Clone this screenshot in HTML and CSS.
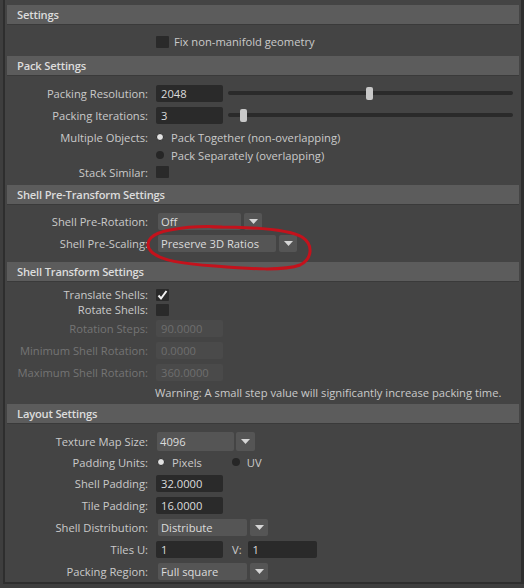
FILE: index.html
```html
<!DOCTYPE html>
<html>
<head>
<meta charset="utf-8">
<link rel="stylesheet" href="styles.css">
</head>
<body>
<div class="frame">
  <section class="sec">
    <div class="hdr">Settings</div>
    <div class="body s1">
      <div class="row h17"><span></span><div class="ctl"><span class="cb"></span><span class="cbtext">Fix non-manifold geometry</span></div></div>
    </div>
  </section>

  <section class="sec">
    <div class="hdr">Pack Settings</div>
    <div class="body s2">
      <div class="row h22"><span class="lbl">Packing Resolution:</span><div class="ctl"><span class="field">2048</span><div class="slider"><span class="handle res"></span></div></div></div>
      <div class="row h22"><span class="lbl">Packing Iterations:</span><div class="ctl"><span class="field">3</span><div class="slider"><span class="handle iter"></span></div></div></div>
      <div class="row h18 mt2"><span class="lbl">Multiple Objects:</span><div class="ctl"><span class="rb on"></span><span class="rtext">Pack Together (non-overlapping)</span></div></div>
      <div class="row h18"><span></span><div class="ctl"><span class="rb"></span><span class="rtext">Pack Separately (overlapping)</span></div></div>
      <div class="row h16"><span class="lbl">Stack Similar:</span><div class="ctl"><span class="cb"></span></div></div>
    </div>
  </section>

  <section class="sec">
    <div class="hdr">Shell Pre-Transform Settings</div>
    <div class="body s3">
      <div class="row h22"><span class="lbl">Shell Pre-Rotation:</span><div class="ctl"><div class="dd"><span class="dd-field w83">Off</span><span class="dd-btn"><svg width="9" height="5" viewBox="0 0 9 5"><polygon points="0,0 9,0 4.5,5" fill="#d6d6d6"/></svg></span></div></div></div>
      <div class="row h22"><span class="lbl">Shell Pre-Scaling:</span><div class="ctl"><div class="dd"><span class="dd-field w118">Preserve 3D Ratios</span><span class="dd-btn"><svg width="9" height="5" viewBox="0 0 9 5"><polygon points="0,0 9,0 4.5,5" fill="#d6d6d6"/></svg></span></div></div></div>
    </div>
  </section>

  <section class="sec">
    <div class="hdr">Shell Transform Settings</div>
    <div class="body s4">
      <div class="row h15"><span class="lbl">Translate Shells:</span><div class="ctl"><span class="cb"><svg width="13" height="12" viewBox="0 0 13 12"><polyline points="2.5,6.5 5,9.5 10.5,2" fill="none" stroke="#f2f2f2" stroke-width="2"/></svg></span></div></div>
      <div class="row h15"><span class="lbl">Rotate Shells:</span><div class="ctl"><span class="cb"></span></div></div>
      <div class="row h22"><span class="lbl dis">Rotation Steps:</span><div class="ctl"><span class="field disf">90.0000</span></div></div>
      <div class="row h22"><span class="lbl dis">Minimum Shell Rotation:</span><div class="ctl"><span class="field disf">0.0000</span></div></div>
      <div class="row h22"><span class="lbl dis">Maximum Shell Rotation:</span><div class="ctl"><span class="field disf">360.0000</span></div></div>
      <div class="row h18"><span></span><div class="ctl"><span class="warn">Warning: A small step value will significantly increase packing time.</span></div></div>
    </div>
  </section>

  <section class="sec">
    <div class="hdr">Layout Settings</div>
    <div class="body s5">
      <div class="row h22"><span class="lbl">Texture Map Size:</span><div class="ctl"><div class="dd dd1"><span class="dd-field w77 tall">4096</span><span class="dd-btn w19 tall"><svg width="9" height="5" viewBox="0 0 9 5"><polygon points="0,0 9,0 4.5,5" fill="#d6d6d6"/></svg></span></div></div></div>
      <div class="row h20"><span class="lbl">Padding Units:</span><div class="ctl"><span class="rb on px"></span><span class="rtext">Pixels</span><span class="rb uv"></span><span class="rtext">UV</span></div></div>
      <div class="row h22"><span class="lbl">Shell Padding:</span><div class="ctl"><span class="field">32.0000</span></div></div>
      <div class="row h22"><span class="lbl">Tile Padding:</span><div class="ctl"><span class="field">16.0000</span></div></div>
      <div class="row h22"><span class="lbl">Shell Distribution:</span><div class="ctl"><div class="dd"><span class="dd-field w89">Distribute</span><span class="dd-btn"><svg width="9" height="5" viewBox="0 0 9 5"><polygon points="0,0 9,0 4.5,5" fill="#d6d6d6"/></svg></span></div></div></div>
      <div class="row h22"><span class="lbl">Tiles U:</span><div class="ctl"><span class="field">1</span><span class="vlbl">V:</span><span class="field w69">1</span></div></div>
      <div class="row h22"><span class="lbl">Packing Region:</span><div class="ctl"><div class="dd"><span class="dd-field w89">Full square</span><span class="dd-btn"><svg width="9" height="5" viewBox="0 0 9 5"><polygon points="0,0 9,0 4.5,5" fill="#d6d6d6"/></svg></span></div></div></div>
    </div>
  </section>
</div>

<svg class="mark" width="524" height="588" viewBox="0 0 524 588">
  <path d="M212,227 C250,227 288,229 302,237 C314,245 312,259 300,265 C284,271 250,269 215,266 C185,264 158,261 150,250 C144,241 152,233 170,230 C186,227 205,226 222,227" fill="none" stroke="#c4121c" stroke-width="3" stroke-linecap="round"/>
</svg>
</body>
</html>
```

FILE: styles.css
```css
html, body {
  margin: 0;
  padding: 0;
}
body {
  width: 524px;
  height: 588px;
  overflow: hidden;
  background: #3e3e3e;
  font-family: "Open Sans", "Noto Sans", sans-serif;
  font-size: 11.2px;
  color: #cacaca;
  position: relative;
}
.frame {
  margin-left: 3px;
  width: 512px;
  padding: 5px 2px 0;
  background: #444444;
  border-left: 2px solid #2e2e2e;
  border-right: 3px solid #2e2e2e;
  border-bottom: 2px solid #2e2e2e;
}
.hdr {
  height: 19px;
  line-height: 19px;
  background: #5c5c5c;
  border-bottom: 1px solid #3a3a3a;
  padding-left: 10px;
  font-weight: 600;
  letter-spacing: -0.2px;
  color: #dcdcdc;
}
.body { display: flex; flex-direction: column; }
.s1 { padding: 8px 0 6px; }
.s2 { padding: 6px 0 5px; }
.s3 { padding: 5px 0 8px; }
.s4 { padding: 5px 0 3px; }
.s5 { padding: 6px 0 0; }

.row {
  display: grid;
  grid-template-columns: 141px 1fr;
  column-gap: 8px;
  align-items: center;
}
.h15 { height: 15px; }
.h16 { height: 16px; }
.h17 { height: 17px; }
.h18 { height: 18px; }
.h20 { height: 20px; }
.h22 { height: 22px; }
.mt2 { margin-top: 2px; }

.lbl { text-align: right; white-space: nowrap; }
.lbl.dis { color: #747474; }
.ctl { display: flex; align-items: center; white-space: nowrap; }

.field {
  box-sizing: border-box;
  width: 67px;
  height: 17px;
  line-height: 17px;
  padding-left: 5px;
  background: #2a2a2a;
  border-radius: 2px;
  color: #dcdcdc;
}
.field.w69 { width: 69px; }
.field.disf { background: #4a4a4a; color: #6e6e6e; }

.slider {
  position: relative;
  width: 285px;
  height: 4px;
  margin-left: 5px;
  background: #2a2a2a;
  border-radius: 2px;
}
.handle {
  position: absolute;
  top: -4.5px;
  width: 7px;
  height: 13px;
  background: #c8c8c8;
  border-radius: 2px;
}
.handle.res { left: 138px; }
.handle.iter { left: 12px; }

.cb {
  width: 13px;
  height: 12px;
  background: #2a2a2a;
  border-radius: 1px;
  display: flex;
}
.cbtext { margin-left: 5px; }

.rb {
  box-sizing: border-box;
  width: 8px;
  height: 8px;
  border-radius: 50%;
  background: #262626;
}
.rb.on {
  background: #e2e2e2;
  border: 1px solid #2a2a2a;
}
.rtext { margin-left: 7px; }
.rb.px { margin-left: 1px; }
.rb.uv { margin-left: 30px; }

.dd { display: flex; gap: 3px; margin-left: 2px; }
.dd.dd1 { margin-left: 1px; gap: 2px; }
.dd-field {
  box-sizing: border-box;
  height: 17px;
  line-height: 17px;
  padding-left: 3px;
  background: #555555;
  border-radius: 2px;
  color: #dcdcdc;
}
.dd-btn {
  width: 18px;
  height: 17px;
  background: #555555;
  border-radius: 2px;
  display: flex;
  align-items: center;
  justify-content: center;
}
.tall { height: 19px; line-height: 19px; }
.w19 { width: 19px; }
.w77 { width: 77px; }
.w83 { width: 83px; }
.w89 { width: 89px; }
.w118 { width: 118px; }

.vlbl { margin-left: 9px; margin-right: 6px; }
.warn { margin-left: -1px; }

.mark {
  position: absolute;
  left: 0;
  top: 0;
  pointer-events: none;
}
```
